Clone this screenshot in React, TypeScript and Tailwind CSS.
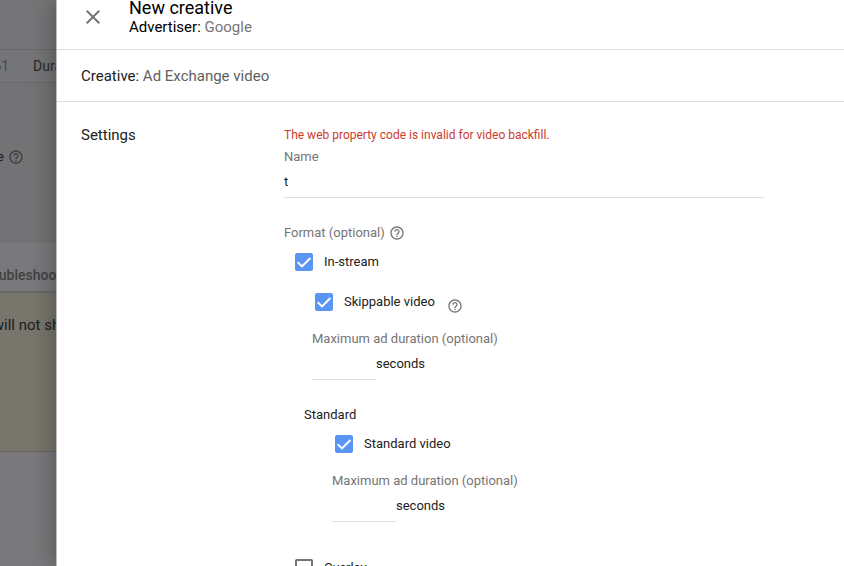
import { useId, useState } from "react";
import type { ReactNode } from "react";
import { MdClose, MdHelpOutline } from "react-icons/md";

interface CheckboxProps {
  label: string;
  defaultChecked?: boolean;
  className?: string;
  children?: ReactNode;
}

function Checkbox({ label, defaultChecked = false, className = "", children }: CheckboxProps) {
  const id = useId();
  const [checked, setChecked] = useState(defaultChecked);

  return (
    <div className={`flex h-10 items-center ${className}`}>
      <span className="relative mr-[11px] size-[18px]">
        <input
          id={id}
          type="checkbox"
          checked={checked}
          onChange={(e) => setChecked(e.target.checked)}
          className="block size-[18px] appearance-none rounded-[2px] border-2 border-[#757575] checked:border-[#5a95f5] checked:bg-[#5a95f5]"
        />
        {checked && (
          <svg viewBox="0 0 18 18" className="pointer-events-none absolute inset-0 size-[18px]">
            <path d="M2.7 9.3 7 13.4 15.4 5" fill="none" stroke="#fff" strokeWidth="2" />
          </svg>
        )}
      </span>
      <label htmlFor={id}>{label}</label>
      {children}
    </div>
  );
}

function HelpButton({ className = "" }: { className?: string }) {
  return (
    <button type="button" aria-label="Help" className={`text-[#757575] ${className}`}>
      <MdHelpOutline size={16} />
    </button>
  );
}

function DurationField({ className = "" }: { className?: string }) {
  const id = useId();

  return (
    <div className={`mt-2 ${className}`}>
      <label htmlFor={id} className="block text-[#757575]">
        Maximum ad duration (optional)
      </label>
      <div className="flex h-8 items-center">
        <input id={id} type="text" className="h-8 w-16 border-b border-[#dedede] outline-none" />
        <span>seconds</span>
      </div>
    </div>
  );
}

function Backdrop() {
  return (
    <div className="flex w-14 shrink-0 flex-col overflow-hidden bg-[#79797b] text-[15px] whitespace-nowrap text-[#1c1c1c]">
      <div className="h-[50px] shrink-0 border-b border-[#69696b] bg-[#757577]" />
      <div className="flex h-[33px] shrink-0 items-center border-b border-[#69696b] bg-[#757577] text-sm">
        <span className="flex w-[9px] shrink-0 justify-end text-[#48484a]">251</span>
        <span className="ml-6 text-[#2b2b2c]">Duration</span>
      </div>
      <div className="flex h-40 shrink-0 items-center bg-[#737375] pb-3">
        <span className="flex w-1 shrink-0 justify-end text-[13px]">Rate</span>
        <MdHelpOutline size={16} className="ml-1 shrink-0 text-[#3f3f40]" />
      </div>
      <div className="flex h-[50px] shrink-0 items-center border-b-2 border-[#69696b] pt-4">
        <span className="flex w-[61px] shrink-0 justify-end text-sm font-medium text-[#414142]">
          Troubleshoot
        </span>
      </div>
      <div className="flex h-[159px] shrink-0 items-start border-b border-[#66645c] bg-[#78756c] pt-[22px] leading-5">
        <span className="flex w-20 shrink-0 justify-end">will not show</span>
      </div>
    </div>
  );
}

export default function App() {
  return (
    <div className="flex h-screen overflow-hidden font-[Roboto,sans-serif]">
      <Backdrop />
      <main className="relative min-w-0 flex-1 border-l border-[#bdbdbd] bg-white text-[13px] leading-[18px] text-[#212121] shadow-[0_0_24px_rgba(0,0,0,0.35)]">
        <header className="flex h-[50px] items-start border-b border-[#dedede] pl-6 text-black">
          <button type="button" aria-label="Close" className="mt-[5px] mr-6 text-[#757575]">
            <MdClose size={24} />
          </button>
          <div>
            <h1 className="text-lg leading-4">New creative</h1>
            <p className="text-[15px] leading-[22px]">
              Advertiser: <span className="text-[#757575]">Google</span>
            </p>
          </div>
        </header>

        <div className="flex h-[52px] items-center border-b border-[#dedede] pl-6 text-[15px]">
          <p>
            Creative: <span className="text-[#616161]">Ad Exchange video</span>
          </p>
        </div>

        <section className="flex pt-6 pr-20 pl-6">
          <h2 className="w-[203px] shrink-0 text-[15px] leading-[18px]">Settings</h2>
          <form className="min-w-0 flex-1">
            <p className="text-xs leading-[18px] text-[#cc3b2d]">
              The web property code is invalid for video backfill.
            </p>
            <label htmlFor="name" className="mt-1 block text-[#757575]">
              Name
            </label>
            <input
              id="name"
              type="text"
              defaultValue="t"
              className="block h-8 w-full border-b border-[#dedede] outline-none"
            />

            <div className="mt-[26px] flex items-center text-[#757575]">
              <span>Format (optional)</span>
              <HelpButton className="ml-1" />
            </div>
            <Checkbox label="In-stream" defaultChecked className="ml-[11px]" />
            <Checkbox label="Skippable video" defaultChecked className="ml-[31px]">
              <HelpButton className="ml-3 pt-2" />
            </Checkbox>
            <DurationField className="ml-7" />

            <h3 className="mt-[26px] ml-5">Standard</h3>
            <Checkbox label="Standard video" defaultChecked className="ml-[51px]" />
            <DurationField className="ml-12" />

            <Checkbox label="Overlay" className="mt-[26px] ml-[11px]" />
          </form>
        </section>
      </main>
    </div>
  );
}
